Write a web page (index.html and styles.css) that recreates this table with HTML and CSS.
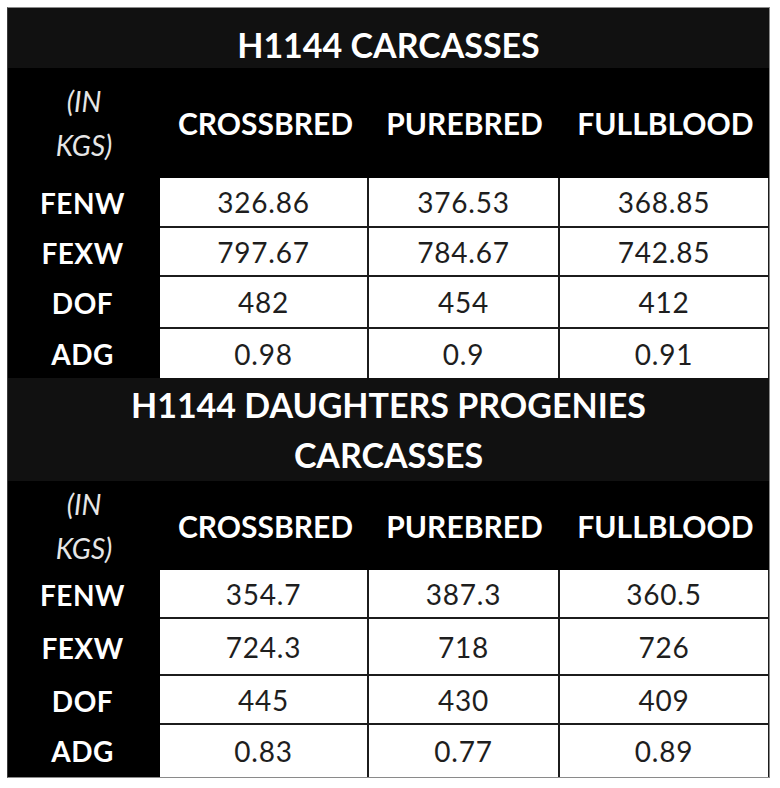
FILE: index.html
```html
<!DOCTYPE html>
<html>
<head>
<meta charset="utf-8">
<title>H1144 Carcasses</title>
<link rel="stylesheet" href="styles.css">
</head>
<body>
<div class="sheet">
  <div class="title title-one">H1144 CARCASSES</div>

  <div class="unit head-row-one">(IN<br>KGS)</div>
  <div class="colhead head-row-one">CROSSBRED</div>
  <div class="colhead head-row-one">PUREBRED</div>
  <div class="colhead head-row-one">FULLBLOOD</div>

  <div class="label">FENW</div>
  <div class="val">326.86</div>
  <div class="val mid">376.53</div>
  <div class="val end">368.85</div>

  <div class="label">FEXW</div>
  <div class="val">797.67</div>
  <div class="val mid">784.67</div>
  <div class="val end">742.85</div>

  <div class="label">DOF</div>
  <div class="val">482</div>
  <div class="val mid">454</div>
  <div class="val end">412</div>

  <div class="label">ADG</div>
  <div class="val last">0.98</div>
  <div class="val mid last">0.9</div>
  <div class="val end last">0.91</div>

  <div class="title title-two">H1144 DAUGHTERS PROGENIES CARCASSES</div>

  <div class="unit">(IN<br>KGS)</div>
  <div class="colhead">CROSSBRED</div>
  <div class="colhead">PUREBRED</div>
  <div class="colhead">FULLBLOOD</div>

  <div class="label">FENW</div>
  <div class="val">354.7</div>
  <div class="val mid">387.3</div>
  <div class="val end">360.5</div>

  <div class="label">FEXW</div>
  <div class="val">724.3</div>
  <div class="val mid">718</div>
  <div class="val end">726</div>

  <div class="label">DOF</div>
  <div class="val">445</div>
  <div class="val mid">430</div>
  <div class="val end">409</div>

  <div class="label">ADG</div>
  <div class="val last">0.83</div>
  <div class="val mid last">0.77</div>
  <div class="val end last">0.89</div>
</div>
</body>
</html>
```

FILE: styles.css
```css
html, body {
  margin: 0;
  padding: 0;
  background: #ffffff;
}

body {
  padding: 7px 0 0 7px;
  font-family: "Lato", "Carlito", "Open Sans", sans-serif;
}

.sheet {
  width: 761px;
  display: grid;
  grid-template-columns: 152px 207px 191px 211px;
  grid-template-rows: 60px 110px 50px 49px 52px 49px 103px 89px 49px 57px 49px 52px;
  border: 1px solid #8a8a8a;
  border-left-color: #3a3a3a;
  background: #000;
}

.title {
  grid-column: 1 / -1;
  background: #111111;
  color: #ffffff;
  font-weight: 700;
  font-size: 34px;
  display: flex;
  align-items: center;
  justify-content: center;
  text-align: center;
}

.title-one {
  padding-top: 12px;
  box-sizing: border-box;
}

.title-two {
  padding: 0 110px;
  line-height: 50px;
}

.unit {
  background: #000;
  color: #e6e6e6;
  font-style: italic;
  font-size: 28px;
  line-height: 44px;
  display: flex;
  align-items: center;
  justify-content: center;
  text-align: center;
}

.colhead {
  background: #000;
  color: #ffffff;
  font-weight: 700;
  font-size: 30px;
  display: flex;
  align-items: center;
  justify-content: center;
  padding-left: 4px;
}

.label {
  background: #000;
  color: #ffffff;
  font-weight: 700;
  font-size: 28px;
  letter-spacing: 0.5px;
  display: flex;
  align-items: center;
  justify-content: center;
  padding-right: 3px;
}

.val {
  background: #ffffff;
  color: #1e1e1e;
  font-size: 28px;
  letter-spacing: 0.8px;
  display: flex;
  align-items: center;
  justify-content: center;
  box-sizing: border-box;
  border-bottom: 2px solid #1c1c1c;
}

.val.mid {
  border-left: 2px solid #1c1c1c;
}

.val.end {
  border-left: 2px solid #1c1c1c;
  border-right: 1px solid #1c1c1c;
}

.val.last {
  border-bottom: none;
}
```
